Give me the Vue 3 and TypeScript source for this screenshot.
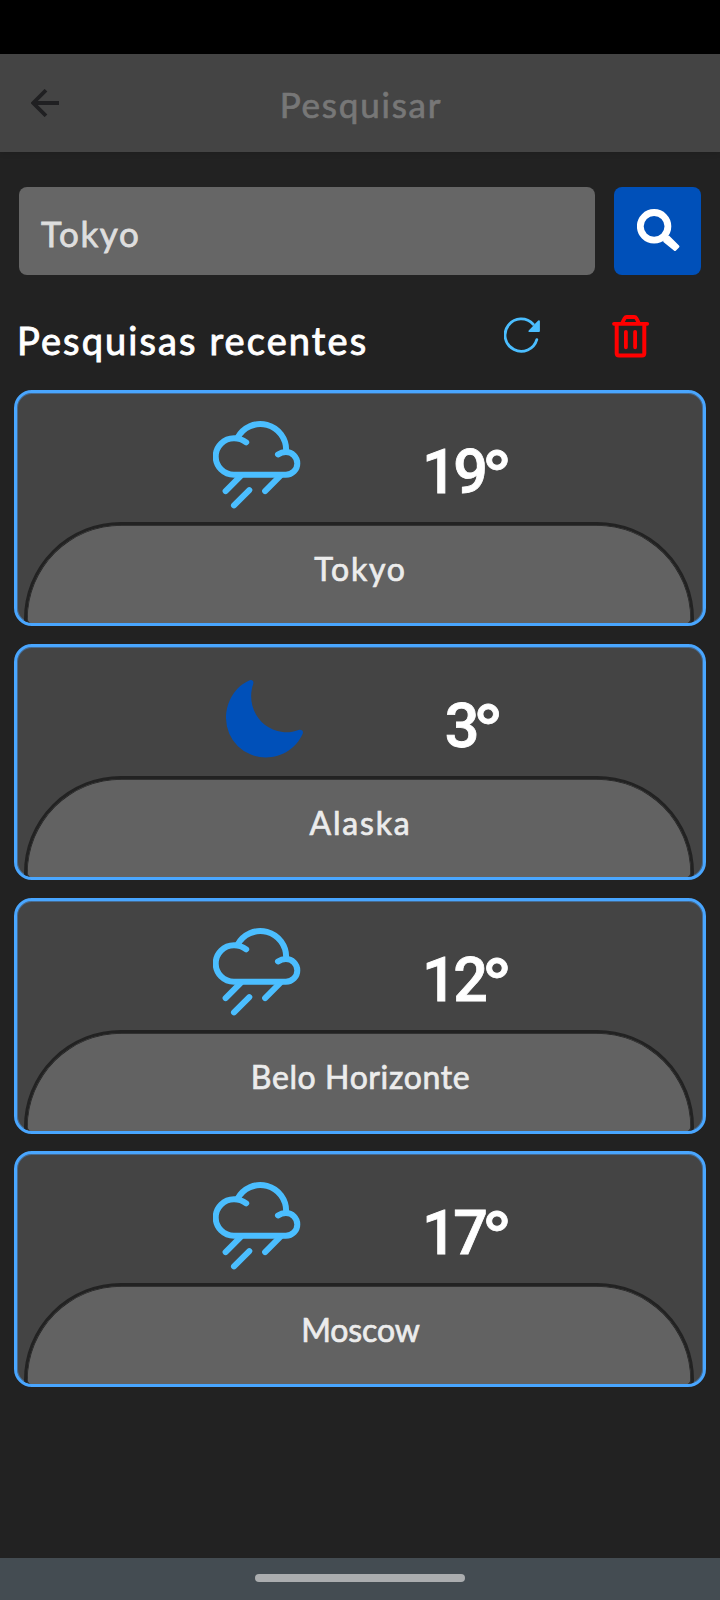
<script setup lang="ts">
import { ref } from 'vue'

interface RecentSearch {
  city: string
  temperature: number
  icon: 'rain' | 'moon'
  slug: string
}

const query = ref('Tokyo')
const recent = ref<RecentSearch[]>([
  { city: 'Tokyo', temperature: 19, icon: 'rain', slug: 'tokyo' },
  { city: 'Alaska', temperature: 3, icon: 'moon', slug: 'alaska' },
  { city: 'Belo Horizonte', temperature: 12, icon: 'rain', slug: 'belo' },
  { city: 'Moscow', temperature: 17, icon: 'rain', slug: 'moscow' },
])
</script>

<template>
  <div class="screen">
    <div class="status-bar"></div>
    <header class="header">
      <svg class="back" width="28" height="28" viewBox="0 0 28 28">
        <path d="M28 14H3M15 1.2 2.2 14 15 26.8" fill="none" stroke="#202022" stroke-width="3.8" />
      </svg>
      <h1 class="title">Pesquisar</h1>
    </header>

    <main class="content">
      <div class="search">
        <div class="field"><span>{{ query }}</span></div>
        <button class="search-button" aria-label="Pesquisar">
          <svg width="43" height="43" viewBox="0 0 43 43">
            <circle cx="17.1" cy="17.3" r="13.8" fill="none" stroke="#fff" stroke-width="6.8" />
            <path d="M26.2 32 27 28.5 28.6 27.4 32.2 26.8 42 36.4Q43 37.5 42 38.5L39 41.6Q38 42.6 36.9 41.6L26.4 33Z" fill="#fff" />
          </svg>
        </button>
      </div>

      <div class="recent-head">
        <h2 class="subtitle">Pesquisas recentes</h2>
        <svg class="refresh" width="36" height="36" viewBox="0 0 36 36">
          <path d="M32.8 22.6A16.2 16.2 0 1 1 29.2 7.2" fill="none" stroke="#4bbeff" stroke-width="2.8" stroke-linecap="round" />
          <path d="M35.9 4.2V14.1Q35.9 15 35 15H25.2Q23.6 14.7 24.7 13.4L28.8 9.3 29.8 7.9 34.2 3.4Q35.6 2.6 35.9 4.2Z" fill="#4bbeff" />
        </svg>
        <svg class="trash" width="38" height="43" viewBox="0 0 38 43">
          <g fill="none" stroke="#ff0000" stroke-linejoin="round" stroke-linecap="round">
            <path d="M2 8.8H35.2" stroke-width="3.8" />
            <path d="M4.7 9.5V38.2Q4.7 40.4 6.9 40.4H30.1Q32.3 40.4 32.3 38.2V9.5" stroke-width="4" />
            <path d="M10.5 7.4 12.7 3.2Q13.4 2 14.7 2H22.3Q23.6 2 24.3 3.2L26.5 7.4" stroke-width="3.8" />
            <path d="M13.9 16.8V32.3M23.1 16.8V32.3" stroke-width="3.8" />
          </g>
        </svg>
      </div>

      <section class="cards">
        <article v-for="item in recent" :key="item.slug" class="card">
          <div class="weather">
            <div class="icon-box">
              <svg v-if="item.icon === 'rain'" width="88" height="89" viewBox="0 0 88 89">
                <g fill="none" stroke="#4bbeff" stroke-width="6" stroke-linecap="round">
                  <path d="M33.2 22.3C29.4 19.4 25.5 18.2 21 18.2A18.3 18.3 0 0 0 21 54.8H72.9A11.4 11.4 0 0 0 72.9 32C69.7 32 67.4 32.8 65 34.4" />
                  <path d="M24.4 18A25.8 25.8 0 0 1 73.1 31" stroke-linecap="butt" />
                  <path d="M27.5 56.2 12.6 71.1M67 56.2 52.1 71.1M36.3 70.1 21 85.4" />
                </g>
              </svg>
              <svg v-else class="moon" width="78" height="78" viewBox="0 0 78 78">
                <path d="M23.8.3C26.3-.5 28 1.2 27.3 3.8 19.8 25 32.5 48.8 56.5 52.1 62.3 52.9 67.2 51.6 72.5 50 75.7 49.1 77.7 50.8 76.7 53.7 70.5 68 56 77.4 40 77.4A39.5 39.5 0 0 1 0 38.3C0 21.6 9.4 6.3 23.8.3Z" fill="#0050b9" />
              </svg>
            </div>
            <div class="temperature" :class="{ single: item.temperature < 10 }">{{ item.temperature }}<span class="degree">°</span></div>
          </div>
          <div class="city"><span :class="item.slug">{{ item.city }}</span></div>
        </article>
      </section>
    </main>

    <footer class="nav"><div class="handle"></div></footer>
  </div>
</template>

<style>
body {
  margin: 0;
  background: #222;
}
</style>

<style scoped>
.screen {
  width: 720px;
  height: 1600px;
  display: flex;
  flex-direction: column;
  overflow: hidden;
  background: #222;
  font-family: Lato, "Liberation Sans", sans-serif;
}
.status-bar {
  height: 54px;
  background: #000;
}
.header {
  display: grid;
  grid-template-columns: 91px 1fr 91px;
  height: 98px;
  background: #444;
  box-shadow: 0 1px 6px rgba(0, 0, 0, 0.12);
}
.back {
  margin: 35px 0 0 31px;
}
.title {
  margin: 28px 0 0;
  font-size: 35px;
  line-height: 44px;
  font-weight: 400;
  letter-spacing: 1.8px;
  text-indent: 2px;
  text-align: center;
  color: #777;
  -webkit-text-stroke: 0.7px #777;
}
.content {
  flex: 1;
  display: flex;
  flex-direction: column;
}
.search {
  display: flex;
  gap: 19px;
  padding: 35px 19px 0;
}
.field {
  width: 576px;
  height: 88px;
  box-sizing: border-box;
  padding: 24px 22px 0;
  border-radius: 8px;
  background: #666;
  color: #dedede;
  -webkit-text-stroke: 0.8px #dedede;
  font-size: 35px;
  line-height: 44px;
  letter-spacing: 1.6px;
}
.search-button {
  display: flex;
  justify-content: center;
  width: 87px;
  height: 88px;
  padding: 22px 0 0 2px;
  box-sizing: border-box;
  align-items: flex-start;
  border: 0;
  border-radius: 8px;
  background: #0050b9;
}
.recent-head {
  display: flex;
  height: 115px;
  padding-left: 17px;
}
.subtitle {
  width: 487px;
  margin: 41px 0 0;
  font-size: 38px;
  line-height: 48px;
  font-weight: 400;
  letter-spacing: 2.1px;
  color: #fff;
  -webkit-text-stroke: 0.9px #fff;
}
.refresh {
  margin-top: 42px;
}
.trash {
  margin: 40px 0 0 71.5px;
}
.cards {
  display: flex;
  flex-direction: column;
  gap: 17.8px;
  padding: 0 14px;
}
.card {
  height: 236px;
  box-sizing: border-box;
  border: 3px solid #49a6ff;
  border-radius: 18px;
  overflow: hidden;
  background: #444;
  box-shadow: inset 0 0 0 1px #476b91;
}
.weather {
  display: grid;
  grid-template-columns: 286px 1fr;
  height: 129px;
}
.icon-box {
  display: flex;
  justify-content: flex-end;
  padding: 26.5px 0 0;
}
.icon-box svg {
  margin-right: 2px;
}
.icon-box .moon {
  margin: 6.5px -0.5px 0 0;
}
.temperature {
  width: 168px;
  padding: 43px 0 0 77px;
  text-align: center;
  color: #fff;
  font-family: Roboto, "Liberation Sans", sans-serif;
  font-size: 61px;
  line-height: 73px;
  font-weight: 500;
  letter-spacing: -3.5px;
  -webkit-text-stroke: 0.8px #fff;
}
.single {
  padding-left: 84px;
}
.degree {
  font-family: Lato, "Liberation Sans", sans-serif;
  font-size: 60px;
  line-height: 0;
  font-weight: 700;
}
.city {
  height: 105px;
  margin: 0 9px 0 7px;
  box-sizing: border-box;
  border: 3px solid #222;
  border-radius: 98px 98px 8px 8px;
  background: #626262;
  box-shadow: inset 0 0 0 0.7px #222;
  padding-top: 24px;
  text-align: center;
  text-indent: 3px;
  color: #ececec;
  -webkit-text-stroke: 0.7px #ececec;
  font-size: 32px;
  line-height: 40px;
}
.tokyo {
  letter-spacing: 1.8px;
}
.alaska {
  letter-spacing: 1.8px;
}
.belo {
  letter-spacing: 0.6px;
}
.moscow {
  letter-spacing: -0.1px;
}
.nav {
  height: 42px;
  display: flex;
  justify-content: center;
  background: #444c52;
}
.handle {
  width: 210px;
  height: 8px;
  margin-top: 16px;
  border-radius: 4px;
  background: #abadaf;
}
</style>
